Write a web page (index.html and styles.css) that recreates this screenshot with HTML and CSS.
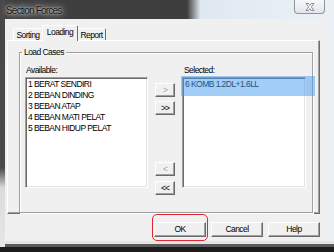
FILE: index.html
```html
<!DOCTYPE html>
<html>
<head>
    <title>Section Forces</title>
    <link rel="stylesheet" href="styles.css">
</head>
<body>
    <div class="window">
        <div class="titlebar">
            <span class="title">Section Forces</span>
            <div class="close">
                <svg width="10" height="8" viewBox="0 0 10 8"><path d="M1 0.5h2.5L5 2.5 6.5 0.5H9L6.3 4 9 7.5H6.5L5 5.5 3.5 7.5H1L3.7 4z" fill="#fff" stroke="#6b7480" stroke-width="0.8"/></svg>
            </div>
        </div>
        <div class="client">
            <div class="tabs">
                <div class="tab tab-sorting">Sorting</div>
                <div class="tab active">Loading</div>
                <div class="tab tab-report">Report</div>
            </div>
            <div class="panel">
                <fieldset class="group">
                    <legend>Load Cases</legend>
                    <div class="cols">
                        <div class="col">
                            <div class="lbl">Available:</div>
                            <div class="list list-left">
                                <div class="item">1 BERAT SENDIRI</div>
                                <div class="item">2 BEBAN DINDING</div>
                                <div class="item">3 BEBAN ATAP</div>
                                <div class="item">4 BEBAN MATI PELAT</div>
                                <div class="item">5 BEBAN HIDUP PELAT</div>
                            </div>
                        </div>
                        <div class="movers">
                            <div class="btn small disabled btn-one">&gt;</div>
                            <div class="btn small btn-all">&gt;&gt;</div>
                            <div class="btn small disabled btn-back">&lt;</div>
                            <div class="btn small btn-backall">&lt;&lt;</div>
                        </div>
                        <div class="col">
                            <div class="lbl lbl-right">Selected:</div>
                            <div class="list list-right">
                                <div class="item picked">6 KOMB 1.2DL+1.6LL</div>
                            </div>
                        </div>
                    </div>
                </fieldset>
            </div>
            <div class="actions">
                <div class="btn wide ok">OK</div>
                <div class="btn wide">Cancel</div>
                <div class="btn wide">Help</div>
            </div>
        </div>
    </div>
</body>
</html>
```

FILE: styles.css
```css
body {
    margin: 0;
    background-color: #1c1c1c;
    font-family: "Liberation Sans", Arial, sans-serif;
    font-size: 8.5px;
    letter-spacing: -0.55px;
    color: #000;
}

.window {
    width: 334px;
    height: 247px;
    display: flex;
    flex-direction: column;
    background:
        linear-gradient(to bottom, #474747 0, #4a4a4a 68%, #d9dbdd 76%, #e4e6e8 100%) left top / 5px 100% no-repeat,
        linear-gradient(to bottom, transparent 0, transparent 241px, #e2e4e6 241px, #e2e4e6 244px, #5a5a5a 244px) left top / 100% 100% no-repeat,
        linear-gradient(to right, #3f3f3f 0, #3d3d3d 56%, #dfe8f1 60%, #ecf1f6 100%);
}

.titlebar {
    height: 19px;
    display: flex;
    align-items: flex-start;
}

.title {
    padding: 5px 0 0 6px;
    font-size: 10px;
    letter-spacing: -0.8px;
    line-height: 12px;
    color: #111;
    text-shadow: 0 0 2px rgba(255, 255, 255, 0.8), 0 0 6px rgba(255, 255, 255, 0.7), 0 0 10px rgba(255, 255, 255, 0.5);
}

.close {
    margin-left: auto;
    margin-right: 9px;
    width: 31px;
    height: 14px;
    box-sizing: border-box;
    border: 1px solid #8c949e;
    border-top: none;
    border-radius: 0 0 4px 4px;
    background: linear-gradient(#f6f8fa, #e1e6ec);
    display: flex;
    align-items: center;
    justify-content: center;
}

.client {
    margin: 0 9px 0 5px;
    height: 222px;
    background-color: #f0f0f0;
}

.tabs {
    height: 21px;
    box-sizing: border-box;
    padding-left: 8px;
    display: flex;
    align-items: flex-end;
    position: relative;
    z-index: 1;
}

.tab {
    height: 12px;
    line-height: 12px;
    box-sizing: border-box;
    text-align: center;
    border: 1px solid;
    border-color: #fff #6d6d6d transparent #fff;
    border-bottom: none;
    border-radius: 2px 2px 0 0;
    background-color: #f0f0f0;
}

.tab-sorting {
    width: 30px;
}

.tab.active {
    width: 36px;
    height: 16px;
    line-height: 12px;
    margin: 0 0 -1px -1px;
    position: relative;
    z-index: 2;
}

.tab-report {
    width: 29px;
    margin-left: -1px;
}

.panel {
    margin-left: 2px;
    width: 313px;
    height: 174px;
    box-sizing: border-box;
    border: 1px solid;
    border-color: #fff #6d6d6d #6d6d6d #fff;
    box-shadow: inset -1px -1px #a0a0a0;
    padding: 6px 0 0 11px;
}

.group {
    margin: 0;
    width: 294px;
    box-sizing: border-box;
    border: 1px solid #a0a0a0;
    box-shadow: inset 1px 1px #fff, 1px 1px #fff;
    padding: 8px 0 17px 5px;
}

.group legend {
    padding: 0 2px;
    margin-left: -3px;
    line-height: 10px;
}

.cols {
    display: flex;
    align-items: flex-start;
}

.lbl {
    line-height: 10px;
    margin-bottom: 2px;
    padding-left: 1px;
}

.lbl-right {
    padding-left: 2px;
}

.list {
    height: 111px;
    box-sizing: border-box;
    background-color: #fff;
    border: 1px solid;
    border-color: #a0a0a0 #fff #fff #a0a0a0;
    box-shadow: inset 1px 1px #696969, inset -1px -1px #e3e3e3;
    padding: 1px 0 0 2px;
}

.list-left {
    width: 123px;
}

.list-right {
    width: 124px;
}

.item {
    line-height: 11px;
    white-space: nowrap;
}

.picked {
    position: relative;
}

.picked::after {
    content: "";
    position: absolute;
    left: -4px;
    top: -3px;
    width: 134px;
    height: 20px;
    background-color: rgba(70, 155, 240, 0.5);
}

.movers {
    width: 20px;
    margin: 0 7px;
    padding-top: 18px;
    display: flex;
    flex-direction: column;
}

.btn {
    box-sizing: border-box;
    text-align: center;
    background-color: #f0f0f0;
    border: 1px solid;
    border-color: #fff #696969 #696969 #fff;
    box-shadow: inset -1px -1px #a0a0a0;
}

.small {
    height: 14px;
    line-height: 12px;
    letter-spacing: -1px;
}

.disabled {
    color: #a0a0a0;
    text-shadow: 1px 1px #fff;
}

.btn-all {
    margin-top: 4px;
}

.btn-back {
    margin-top: 47px;
}

.btn-backall {
    margin-top: 5px;
}

.actions {
    margin-top: 8px;
    padding-right: 5px;
    display: flex;
    justify-content: flex-end;
    gap: 5px;
}

.wide {
    width: 52px;
    height: 15px;
    line-height: 13px;
}

.ok {
    position: relative;
}

.ok::after {
    content: "";
    position: absolute;
    left: -3px;
    top: -9px;
    right: -3px;
    bottom: -5px;
    border: 1.5px solid #e0262e;
    border-radius: 5px;
}
```
